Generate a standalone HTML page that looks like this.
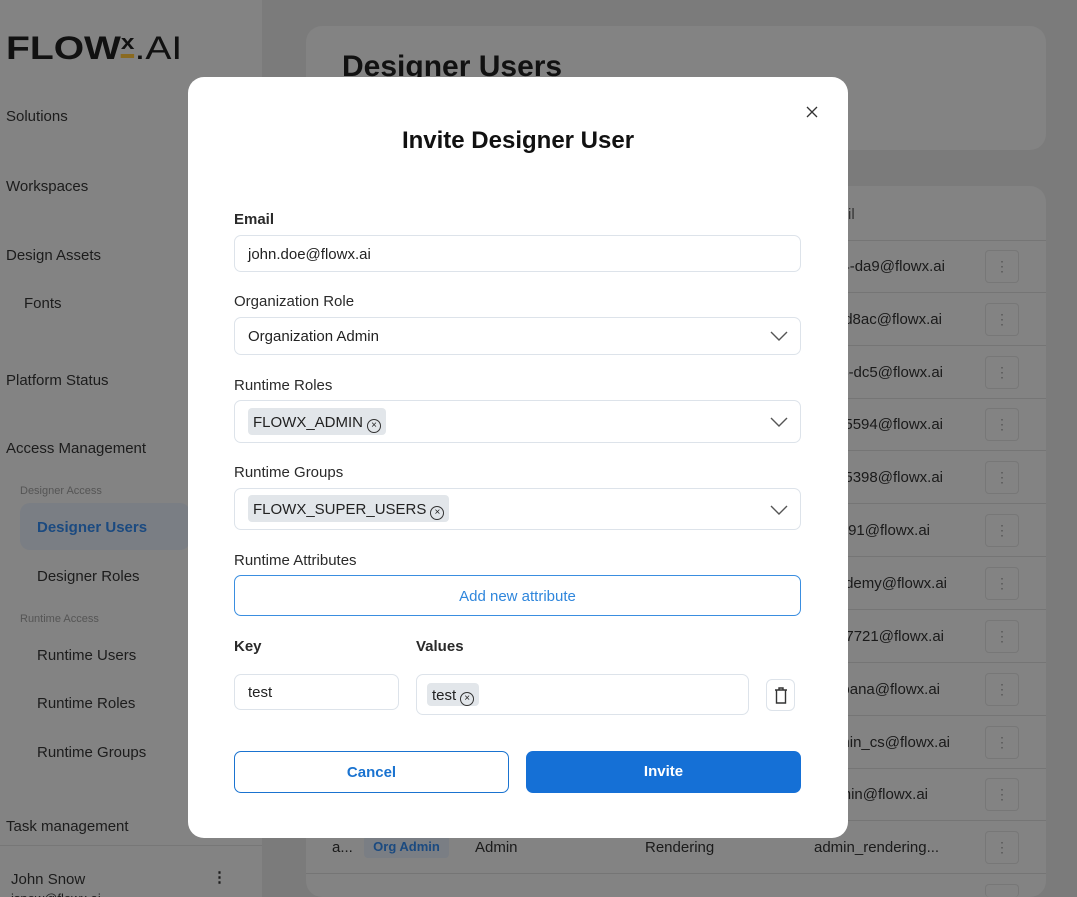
<!DOCTYPE html>
<html><head><style>
*{box-sizing:border-box;margin:0;padding:0}
html,body{width:1077px;height:897px;overflow:hidden}
body{font-family:"Liberation Sans",sans-serif;background:#7b7b7b;position:relative;color:#1a1a1a}
.a{position:absolute}
.sb{left:0;top:0;width:262px;height:897px;background:#838383}
.nav{position:absolute;font-size:15px;color:#1c1c1c;margin-top:2px}
.sm{position:absolute;font-size:11px;color:#555;margin-top:1px}
.card{background:#838383;border-radius:16px}
.row{position:absolute;left:306px;width:740px;height:1px;background:#757575}
.em{position:absolute;font-size:15px;color:#1a1a1a;white-space:nowrap;margin-top:2px}
.kb{position:absolute;left:985px;width:34px;height:33px;border:1px solid #777;border-radius:4px;color:#555;text-align:center;font-size:14px;line-height:31px}
.modal{left:188px;top:77px;width:660px;height:761px;background:#fff;border-radius:16px}
.lbl{position:absolute;left:46px;font-size:15px;font-weight:bold;color:#2a2a2a;margin-top:2px}
.inp{position:absolute;left:46px;width:567px;border:1px solid #dde3ea;border-radius:7px;font-size:15px;color:#222}
.chip{position:absolute;background:#e2e6ea;border-radius:4px;font-size:15px;color:#222;padding:0 5px;height:27px;line-height:27px}
.chev{position:absolute;right:12px;width:18px;height:10px}
.x{display:inline-block;width:14px;height:14px;border:1.3px solid #333;border-radius:50%;font-size:10px;line-height:11px;text-align:center;vertical-align:-1px;margin-left:4px}
</style></head><body>
<div class="a sb"></div>
<div class="a" style="left:6px;top:30px;font-size:32px;font-weight:900;color:#111;transform:scaleX(1.22);transform-origin:left;white-space:nowrap">FLOW<span style="font-size:20px;position:relative;top:-10px;border-bottom:4px solid #8a6a20">x</span><span style="font-weight:300">.AI</span></div>
<div class="nav" style="left:6px;top:106px">Solutions</div>
<div class="nav" style="left:6px;top:176px">Workspaces</div>
<div class="nav" style="left:6px;top:245px">Design Assets</div>
<div class="nav" style="left:24px;top:293px">Fonts</div>
<div class="nav" style="left:6px;top:370px">Platform Status</div>
<div class="nav" style="left:6px;top:438px">Access Management</div>
<div class="sm" style="left:20px;top:484px">Designer Access</div>
<div class="a" style="left:20px;top:503px;width:170px;height:47px;background:#7a7e84;border-radius:10px"></div>
<div class="nav" style="left:37px;top:517px;font-weight:bold;color:#1b4a80">Designer Users</div>
<div class="nav" style="left:37px;top:566px">Designer Roles</div>
<div class="sm" style="left:20px;top:612px">Runtime Access</div>
<div class="nav" style="left:37px;top:645px">Runtime Users</div>
<div class="nav" style="left:37px;top:693px">Runtime Roles</div>
<div class="nav" style="left:37px;top:742px">Runtime Groups</div>
<div class="nav" style="left:6px;top:816px">Task management</div>
<div class="a" style="left:0;top:845px;width:262px;height:1px;background:#777"></div>
<div class="nav" style="left:11px;top:869px">John Snow</div>
<div class="nav" style="left:212px;top:866px;font-weight:bold">⋮</div>
<div class="nav" style="left:11px;top:889px;font-size:13px">jsnow@flowx.ai</div>

<div class="a card" style="left:306px;top:26px;width:740px;height:124px"></div>
<div class="a" style="left:342px;top:50px;font-size:30px;font-weight:bold;color:#111">Designer Users</div>
<div class="a card" style="left:306px;top:186px;width:740px;height:711px"></div>
<div class="em" style="top:204px;left:848px;color:#333">il</div>
<div class="row" style="top:240px"></div><div class="row" style="top:292px"></div><div class="row" style="top:345px"></div><div class="row" style="top:398px"></div><div class="row" style="top:450px"></div><div class="row" style="top:503px"></div><div class="row" style="top:556px"></div><div class="row" style="top:609px"></div><div class="row" style="top:662px"></div><div class="row" style="top:715px"></div><div class="row" style="top:768px"></div><div class="row" style="top:820px"></div><div class="row" style="top:873px"></div>
<div class="em" style="top:256px;right:132px">6a-1234-da9@flowx.ai</div><div class="kb" style="top:250px">⋮</div>
<div class="em" style="top:309px;right:135px">6a-1234-d8ac@flowx.ai</div><div class="kb" style="top:303px">⋮</div>
<div class="em" style="top:362px;right:134px">6a-1234-dc5@flowx.ai</div><div class="kb" style="top:356px">⋮</div>
<div class="em" style="top:414px;right:134px">6a-12345594@flowx.ai</div><div class="kb" style="top:408px">⋮</div>
<div class="em" style="top:467px;right:134px">6a-12345398@flowx.ai</div><div class="kb" style="top:461px">⋮</div>
<div class="em" style="top:520px;right:147px">6a-1234591@flowx.ai</div><div class="kb" style="top:514px">⋮</div>
<div class="em" style="top:573px;right:130px">user.academy@flowx.ai</div><div class="kb" style="top:567px">⋮</div>
<div class="em" style="top:626px;right:133px">6a-12347721@flowx.ai</div><div class="kb" style="top:620px">⋮</div>
<div class="em" style="top:679px;right:137px">user.ioana@flowx.ai</div><div class="kb" style="top:673px">⋮</div>
<div class="em" style="top:732px;right:127px">user.admin_cs@flowx.ai</div><div class="kb" style="top:726px">⋮</div>
<div class="em" style="top:784px;right:149px">user.admin@flowx.ai</div><div class="kb" style="top:778px">⋮</div>
<div class="em" style="top:837px;left:814px">admin_rendering...</div><div class="kb" style="top:831px">⋮</div>
<div class="em" style="top:837px;left:332px">a...</div>
<div class="a" style="left:364px;top:836px;width:85px;height:22px;background:#7a7e84;border-radius:4px;color:#1b4a80;font-size:13px;font-weight:bold;text-align:center;line-height:22px">Org Admin</div>
<div class="em" style="top:837px;left:475px">Admin</div>
<div class="em" style="top:837px;left:645px">Rendering</div>
<div class="kb" style="top:884px;height:13px;border-bottom:none"></div>

<div class="a modal">
<svg class="a" style="left:618px;top:29px" width="12" height="12" viewBox="0 0 12 12"><path d="M1 1L11 11M11 1L1 11" stroke="#333" stroke-width="1.3"/></svg>
<div class="a" style="left:0;width:660px;top:50px;text-align:center;font-size:24px;font-weight:bold;color:#111">Invite Designer User</div>
<div class="lbl" style="top:132px">Email</div>
<div class="inp" style="top:158px;height:37px;padding:0 13px;line-height:37px">john.doe@flowx.ai</div>
<div class="lbl" style="top:214px;font-weight:normal">Organization Role</div>
<div class="inp" style="top:240px;height:38px;padding:0 13px;line-height:38px">Organization Admin<svg class="chev" style="top:13px" viewBox="0 0 18 10"><path d="M1 1L9 9L17 1" fill="none" stroke="#555" stroke-width="1.4"/></svg></div>
<div class="lbl" style="top:298px;font-weight:normal">Runtime Roles</div>
<div class="inp" style="top:323px;height:43px"><div class="chip" style="left:13px;top:7px;line-height:29px">FLOWX_ADMIN<span class="x">×</span></div><svg class="chev" style="top:16px" viewBox="0 0 18 10"><path d="M1 1L9 9L17 1" fill="none" stroke="#555" stroke-width="1.4"/></svg></div>
<div class="lbl" style="top:385px;font-weight:normal">Runtime Groups</div>
<div class="inp" style="top:411px;height:42px"><div class="chip" style="left:13px;top:6px;line-height:29px">FLOWX_SUPER_USERS<span class="x">×</span></div><svg class="chev" style="top:16px" viewBox="0 0 18 10"><path d="M1 1L9 9L17 1" fill="none" stroke="#555" stroke-width="1.4"/></svg></div>
<div class="lbl" style="top:473px;font-weight:normal">Runtime Attributes</div>
<div class="a" style="left:46px;top:498px;width:567px;height:41px;border:1px solid #3a8ee0;border-radius:7px;text-align:center;line-height:41px;color:#2f86dc;font-size:15px">Add new attribute</div>
<div class="lbl" style="top:559px">Key</div>
<div class="lbl" style="top:559px;left:228px">Values</div>
<div class="inp" style="top:597px;width:165px;height:36px;padding:0 13px;line-height:36px">test</div>
<div class="inp" style="left:228px;top:597px;width:333px;height:41px"><div class="chip" style="left:10px;top:8px;height:23px;line-height:25px">test<span class="x">×</span></div></div>
<div class="a" style="left:578px;top:602px;width:29px;height:32px;border:1px solid #dde3ea;border-radius:6px"><svg style="position:absolute;left:7px;top:7px" width="14" height="17" viewBox="0 0 14 17"><path d="M1 3H13M5 3V1H9V3M2.5 3V16H11.5V3" fill="none" stroke="#333" stroke-width="1.4"/></svg></div>
<div class="a" style="left:46px;top:674px;width:275px;height:42px;border:1px solid #1a73d0;border-radius:7px;text-align:center;line-height:42px;color:#1a73d0;font-size:15px;font-weight:bold">Cancel</div>
<div class="a" style="left:338px;top:674px;width:275px;height:42px;background:#1570d6;border-radius:7px;text-align:center;line-height:42px;color:#fff;font-size:15px;font-weight:bold">Invite</div>
</div>
</body></html>
